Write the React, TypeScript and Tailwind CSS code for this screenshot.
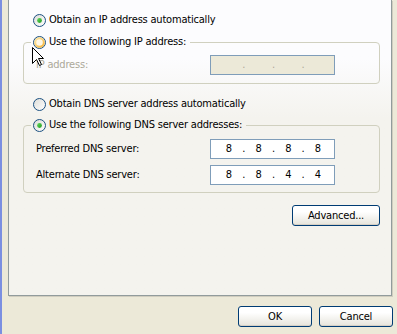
import React from "react";

function Radio({ checked, hover }: { checked?: boolean; hover?: boolean }) {
  return (
    <svg width="13" height="13" viewBox="0 0 13 13" className="shrink-0 block">
      <defs>
        <linearGradient id="rbg" x1="0" y1="0" x2="1" y2="1">
          <stop offset="0" stopColor="#DCDCD7" />
          <stop offset="1" stopColor="#FFFFFF" />
        </linearGradient>
        <linearGradient id="rchk" x1="0" y1="0" x2="1" y2="1">
          <stop offset="0" stopColor="#63D95E" />
          <stop offset="1" stopColor="#1E9A1E" />
        </linearGradient>
        <linearGradient id="rhov" x1="0" y1="0" x2="1" y2="1">
          <stop offset="0" stopColor="#FFE9A8" />
          <stop offset="1" stopColor="#F5B338" />
        </linearGradient>
      </defs>
      <circle cx="6.5" cy="6.5" r="6" fill="url(#rbg)" stroke="#1C5180" strokeWidth="1" />
      {hover && (
        <circle cx="6.5" cy="6.5" r="4.3" fill="#FFF8E6" stroke="url(#rhov)" strokeWidth="2" />
      )}
      {checked && <circle cx="6.5" cy="6.5" r="2.4" fill="url(#rchk)" />}
    </svg>
  );
}

function RadioRow({ label, checked, hover }: { label: string; checked?: boolean; hover?: boolean }) {
  return (
    <div className="flex items-center gap-[3px] h-[14px] whitespace-nowrap">
      <Radio checked={checked} hover={hover} />
      <span>{label}</span>
    </div>
  );
}

function IpBox({ parts, disabled }: { parts: string[]; disabled?: boolean }) {
  const cells: React.ReactNode[] = [];
  parts.forEach((p, i) => {
    cells.push(
      <span key={"d" + i} className="w-[15px] text-center">
        {p}
      </span>
    );
    if (i < parts.length - 1)
      cells.push(
        <span key={"s" + i} className={"w-[14.67px] text-center " + (disabled ? "text-[#ACA899]" : "")}>
          .
        </span>
      );
  });
  return (
    <div
      className={
        "flex items-center w-[125px] h-[20px] border border-[#7F9DB9] pl-[10.5px] tracking-normal " +
        (disabled ? "bg-[#ECE9D8]" : "bg-white")
      }
    >
      {cells}
    </div>
  );
}

function XPButton({ label, w }: { label: string; w: string }) {
  return (
    <div
      className={
        "flex items-center justify-center h-[21px] rounded-[3px] border border-[#003C74] bg-linear-to-b from-white from-30% to-[#E6E4DB] shadow-[inset_0_-1px_0_#D6D0C5] " +
        w
      }
    >
      {label}
    </div>
  );
}

export default function App() {
  return (
    <div className="relative flex w-[397px] h-[334px] overflow-hidden bg-[#ECE9D8] text-black text-[11px] leading-[14px] tracking-[-0.2px] font-['DejaVu_Sans_Condensed','DejaVu_Sans',sans-serif]">
      <div className="w-[2px] shrink-0 bg-[#7B8FE1]" />
      <div className="flex flex-col flex-1 pl-[6px] pr-[4px]">
        <div className="w-[384px] h-[296px] border-x border-b border-[#919B9C] shadow-[1px_1px_0_#D0CDBF] bg-linear-to-b from-[#FCFCFE] from-20% to-[#F4F3EE] to-40% flex flex-col pt-[13px] pl-[14px] pr-[11px]">
          <div className="ml-[10px]">
            <RadioRow label="Obtain an IP address automatically" checked />
          </div>
          <fieldset className="mt-[8px] border border-[#D0D0BF] rounded-[4px] pl-[7px] min-w-0">
            <legend className="pl-[2px] pr-[4px]">
              <RadioRow label="Use the following IP address:" hover />
            </legend>
            <div className="flex items-center pt-[6px] pb-[8px]">
              <span className="w-[179px] pl-[5px] text-[#ACA899]">IP address:</span>
              <IpBox parts={["", "", "", ""]} disabled />
            </div>
          </fieldset>
          <div className="ml-[10px] mt-[13px]">
            <RadioRow label="Obtain DNS server address automatically" />
          </div>
          <fieldset className="mt-[7px] border border-[#D0D0BF] rounded-[4px] pl-[7px] min-w-0">
            <legend className="pl-[2px] pr-[4px]">
              <RadioRow label="Use the following DNS server addresses:" checked />
            </legend>
            <div className="flex flex-col gap-[6px] pt-[7px] pb-[7px]">
              <div className="flex items-center">
                <span className="w-[179px] pl-[5px]">Preferred DNS server:</span>
                <IpBox parts={["8", "8", "8", "8"]} />
              </div>
              <div className="flex items-center">
                <span className="w-[179px] pl-[5px]">Alternate DNS server:</span>
                <IpBox parts={["8", "8", "4", "4"]} />
              </div>
            </div>
          </fieldset>
          <div className="flex justify-end mt-[12px]">
            <XPButton label="Advanced..." w="w-[88px]" />
          </div>
        </div>
        <div className="flex justify-end gap-[7px] mt-[10px]">
          <XPButton label="OK" w="w-[74px]" />
          <XPButton label="Cancel" w="w-[74px]" />
        </div>
      </div>
      <svg
        className="absolute left-[32px] top-[47px]"
        width="13"
        height="20"
        viewBox="0 0 13 20"
      >
        <path
          d="M0.5 0.5 L0.5 16.5 L4.5 12.5 L7.5 18.5 L9.5 17.5 L6.5 11.5 L11.5 11.5 Z"
          fill="#FFFFFF"
          stroke="#000000"
          strokeWidth="1"
          strokeLinejoin="miter"
        />
      </svg>
    </div>
  );
}
